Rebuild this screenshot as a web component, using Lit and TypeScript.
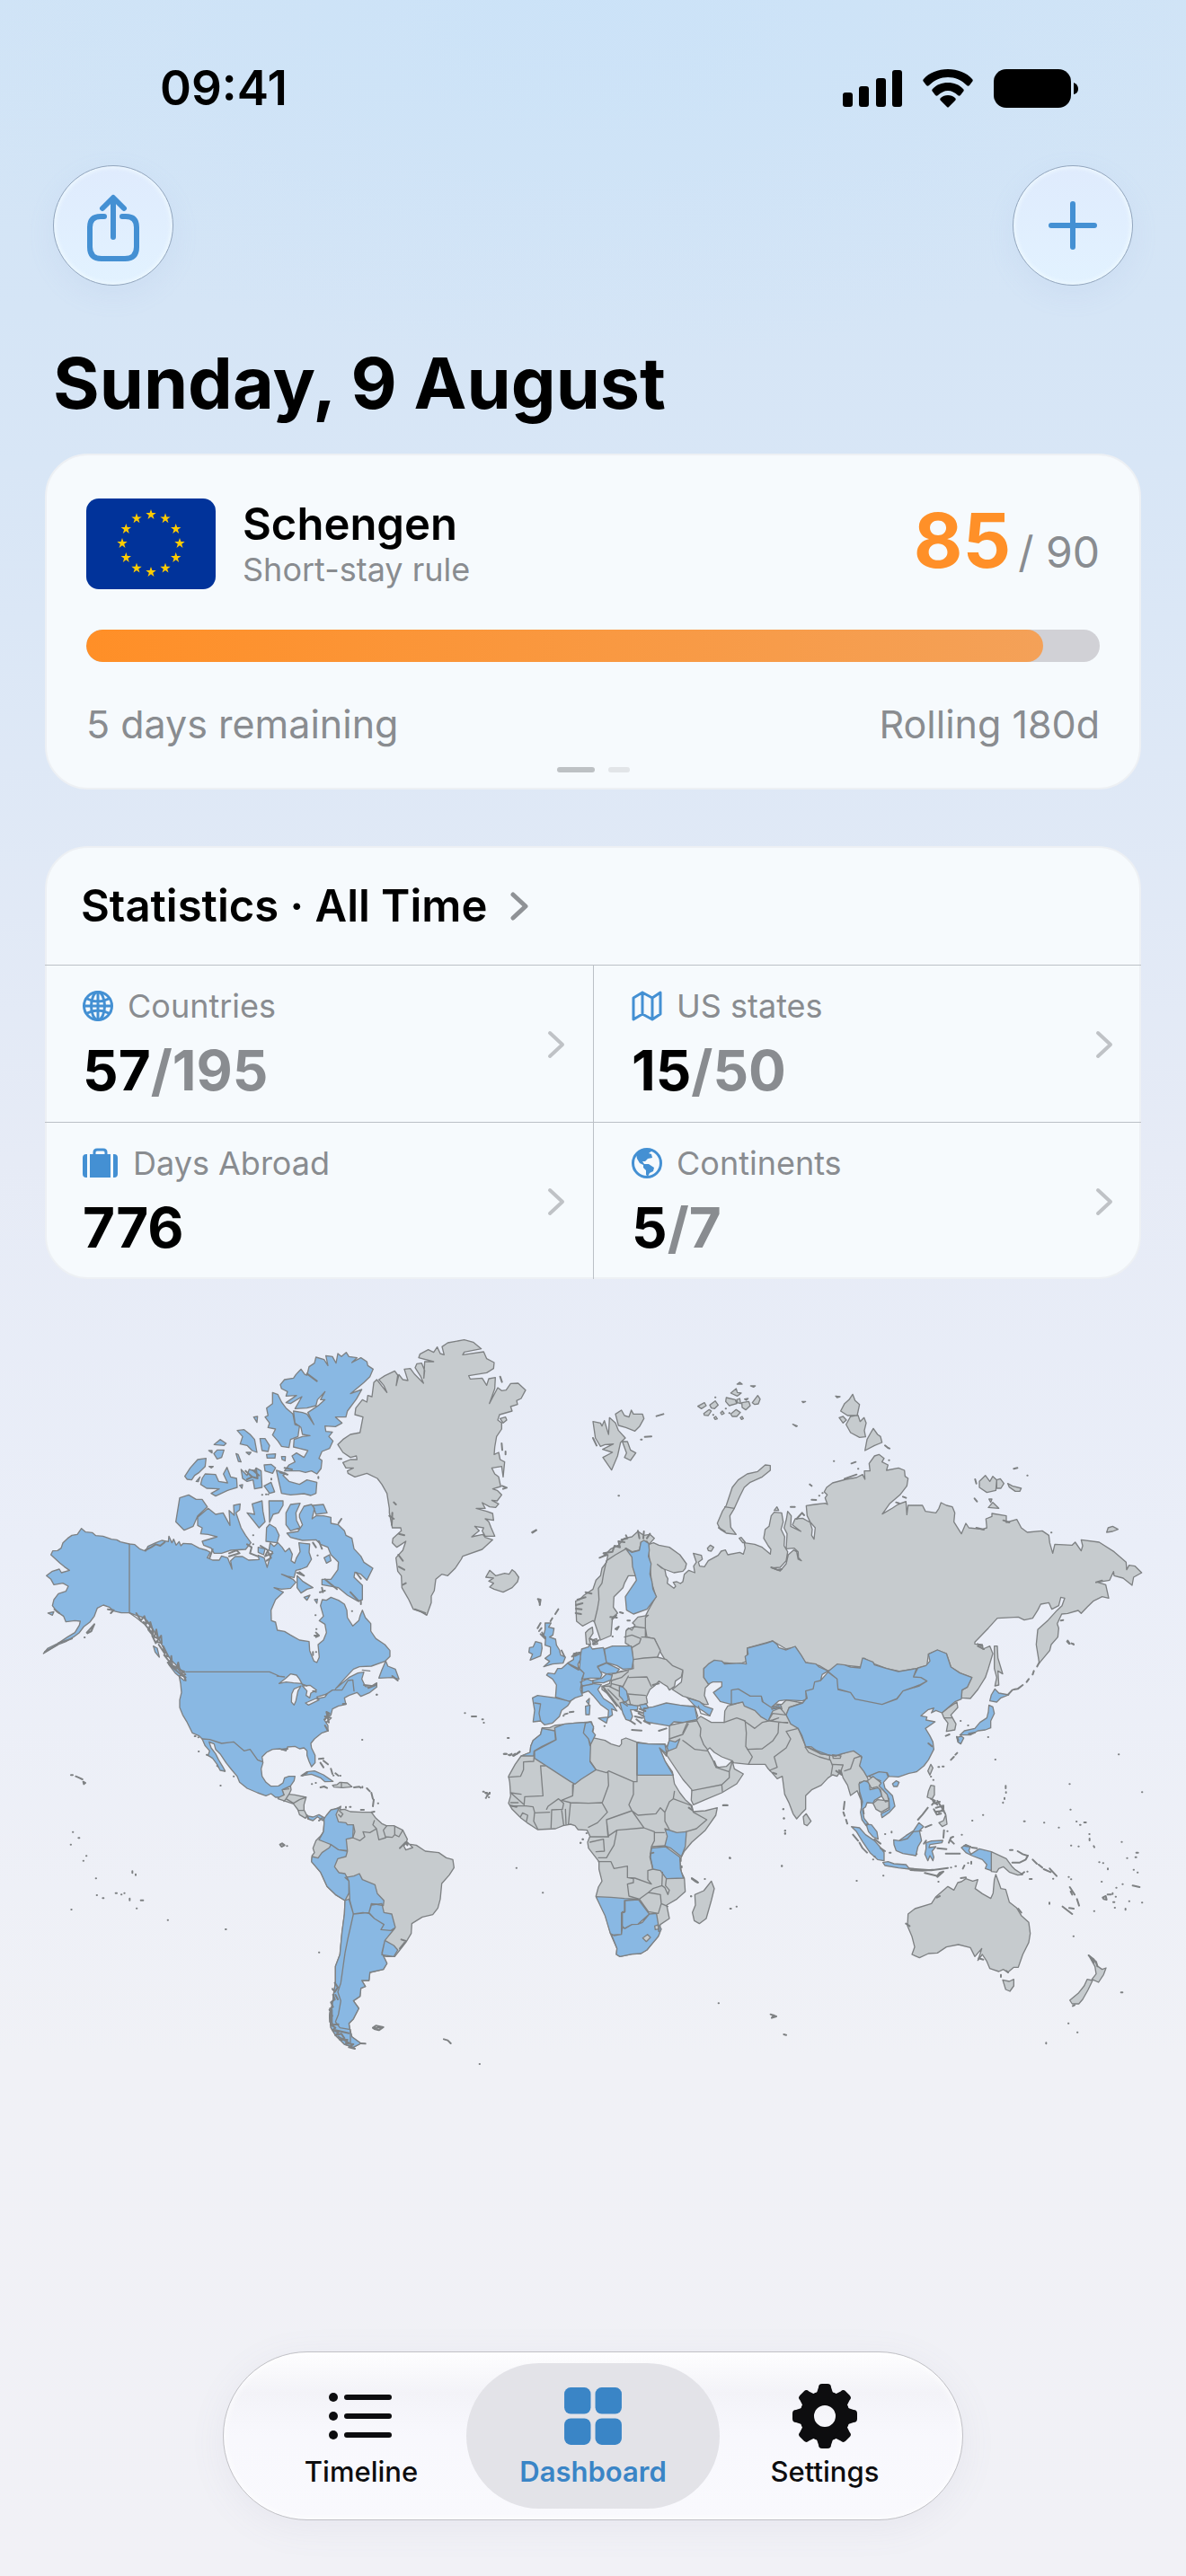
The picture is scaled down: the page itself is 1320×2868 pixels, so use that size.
import { html, svg, css, LitElement } from 'lit';
import { customElement, property, state } from 'lit/decorators.js';
import { classMap } from 'lit/directives/class-map.js';

interface Region {
  x: number;
  y: number;
  land?: string;
  visited?: string;
  rest?: string;
  borders?: string;
  coast?: string;
  specks?: string;
}

// Each region is drawn in its own local coordinates and shifted into place.
const REGIONS: Region[] = [
  {
    // Russia and the northern islands
    x: 2160,
    y: 150,
    land: `M-113,595 -98,590 -80,598 -45,605 -10,630 12,660 8,676 0,685 -30,690 -70,675 -85,662 -60,680 -56,700 -50,710 -52,725 -30,742 -24,735 -32,722 -20,720 -8,726 0,720 5,695 20,682 40,690 36,668 45,655 35,625 62,632 65,645 52,655 56,668 72,670 85,650 118,632 128,618 142,614 150,630 190,622 202,628 208,608 205,590 240,595 265,605 292,628 294,612 285,600 270,575 275,545 288,535 295,500 305,488 330,490 335,520 328,545 340,570 338,600 350,620 345,650 325,672 298,674 325,684 345,660 352,630 370,614 380,620 385,645 396,650 386,640 385,620 372,608 345,610 348,560 338,540 346,510 350,485 362,500 360,535 394,552 366,530 375,510 400,508 425,522 432,545 430,565 438,578 442,540 425,520 415,500 412,466 440,462 475,458 483,462 475,440 482,430 472,420 480,405 500,390 545,378 580,372 600,362 608,378 606,350 625,350 622,325 640,300 655,295 672,308 665,320 685,330 680,348 720,340 740,348 742,368 752,375 748,400 725,430 690,460 666,494 700,474 718,462 745,452 748,496 752,465 800,465 810,485 845,490 855,475 862,456 880,465 900,470 908,490 905,520 930,560 945,525 955,540 1000,545 1015,540 1012,510 1032,502 1032,492 1080,500 1080,522 1115,512 1130,540 1150,555 1200,550 1222,565 1225,590 1235,625 1242,595 1300,598 1310,588 1330,617 1335,600 1330,580 1390,588 1440,620 1480,655 1482,680 1490,665 1510,668 1532,690 1505,705 1500,732 1470,708 1440,700 1438,686 1425,715 1385,722 1412,730 1422,775 1400,770 1370,785 1350,805 1330,826 1320,816 1285,826 1265,828 1250,860 1255,875 1252,905 1230,930 1225,950 1190,992 1180,930 1185,880 1220,848 1250,815 1266,800 1275,775 1262,772 1255,800 1232,812 1222,790 1195,795 1185,815 1168,842 1140,848 1120,838 1050,842 1020,875 975,922 975,928 1000,930 1002,945 1025,935 1035,960 1020,1010 1010,1040 985,1080 960,1110 930,1108 932,1082 950,1072 965,1040 925,1025 895,1005 880,960 850,948 820,962 815,1000 780,1010 725,1020 680,1010 640,995 605,975 595,1005 530,998 485,1018 455,1000 410,990 375,938 345,945 300,918 215,942 215,985 190,995 130,990 105,985 70,1010 70,1040 90,1060 75,1075 72,1100 85,1130 72,1130 40,1115 0,1102 -35,1080 -5,1055 0,1020 -40,1002 -60,980 -78,950 -95,910 -120,905 -125,875 -125,835 -115,815 -90,770 -105,720 -110,660 -115,610Z
      M115,525 132,485 145,465 165,405 185,380 215,360 250,352 275,330 292,332 292,348 265,370 225,388 205,405 190,435 172,475 157,500 160,538 178,562 145,558 125,545Z
      M527,150 540,125 555,112 567,94 575,115 590,128 582,165 550,165Z M545,195 560,168 585,164 592,185 605,172 612,190 606,215 610,236 590,238 560,222Z M608,282 615,245 626,225 636,208 650,228 660,235 665,255 640,265Z M522,172 535,168 546,180 535,190Z
      M990,385 1010,365 1025,385 1035,368 1048,380 1045,415 1015,422 990,405Z M1048,380 1060,376 1072,392 1062,408 1048,408Z M1085,392 1100,400 1130,408 1125,418 1110,418 1090,404Z M1020,472 1035,455 1055,475Z M1415,555 1420,540 1435,535 1453,545 1435,552Z
      M1040,935 1050,935 1052,975 1068,1028 1052,1018 1055,1065 1042,1068 1048,1040 1040,1010Z M82,608 92,598 103,605 95,618 85,616Z M305,482 314,470 320,482Z M188,575 195,572 208,588 200,590Z M1022,444 1032,444 1028,455Z
      M50,134 72,122 78,132 62,142Z M70,158 88,145 95,150 85,165 72,164Z M90,130 108,116 118,130 106,142 95,140Z M145,105 175,112 180,125 155,132 143,118Z M160,90 178,75 182,88 195,90 182,100Z M180,112 190,108 193,125 182,122Z M197,122 220,118 225,132 210,146 198,138Z M232,122 250,98 258,110 252,126 240,128Z M160,160 178,145 192,155 180,168 165,168Z M126,156 132,150 138,158 130,162Z M104,172 110,168 115,176 108,178Z M192,172 198,168 202,175 196,178Z M181,60 190,54 198,60Z M226,66 242,66 236,70Z M206,110 218,108 212,114Z M398,118 410,118 402,122Z M367,194 382,200 378,202Z M510,100 525,102 515,105Z`,
    borders: 'M140,470 172,475',
    coast: 'M675,265 685,273 690,275 M563,325 577,320 M430,446 445,447 M360,470 374,470 M976,378 980,392 M974,442 982,452 M540,376 580,362 M1105,343 1117,340 M1285,917 1292,927 M1262,850 1270,848 M295,672 315,680 330,678 M120,540 140,552 M985,935 1005,945 M1070,515 1090,522 M1380,722 1400,716 M424,395 430,400 M380,510 398,490 405,498 M735,436 745,440 M712,455 722,458 M980,540 1005,546',
    specks: 'M108,104h1 M504,317h1 M688,314h1 M585,343h1 M455,433h1 M1150,365h1 M1230,556h1 M143,142h1 M155,157h1 M101,163h1 M1303,928h1 M466,424h1',
  },
  {
    // Asia and Oceania
    x: 2160,
    y: 990,
    land: `M-45,360 45,340 60,330 95,350 138,350 140,312 150,295 170,290 200,280 330,290 345,275 400,285 355,300 345,325 385,370 410,430 460,455 510,462 570,442 595,460 598,500 615,530 620,545 590,550 590,585 600,620 605,655 597,640 595,610 582,578 560,594 550,560 535,535 528,510 515,530 500,525 485,535 462,560 430,575 410,595 410,640 395,655 380,672 368,655 355,620 340,590 332,530 315,538 295,515 285,505 275,490 220,490 170,485 165,478 130,465 105,450 90,435 82,442 100,475 108,495 120,500 145,497 165,478 172,505 202,522 180,555 130,585 75,608 35,625 28,610 30,575 0,540 -20,510 -40,480 -60,450 -45,410Z
      M402,665 412,655 428,680 415,695 405,690Z M865,318 885,302 915,282 918,300 895,325 912,355 908,375 880,380 885,352 872,335Z
      M95,880 105,905 95,945 78,1005 55,1022 38,1012 32,985 42,960 40,925 70,912Z
      M818,512 828,490 835,502 825,526Z M820,580 828,560 840,562 840,592 832,606 816,600Z M855,685 870,678 878,658 882,690 866,698Z
      M1030,782 1080,805 1098,830 1110,842 1135,858 1118,860 1090,850 1070,832 1055,838 1048,850 1030,848Z
      M752,990 775,972 830,955 845,932 885,898 905,910 918,885 930,882 945,872 968,880 985,875 976,905 1000,922 1028,938 1036,920 1040,875 1045,858 1055,885 1062,905 1078,908 1090,950 1115,970 1130,995 1155,1018 1160,1055 1155,1085 1135,1125 1120,1168 1105,1168 1085,1185 1070,1175 1055,1182 1025,1172 1015,1148 1000,1125 985,1145 992,1125 998,1105 975,1132 960,1102 920,1092 880,1100 850,1120 820,1122 790,1136 765,1125 774,1100 765,1065 750,1030Z
      M1068,1210 1090,1215 1105,1208 1105,1230 1092,1248 1078,1242Z M1355,1128 1372,1140 1386,1165 1400,1175 1413,1170 1405,1192 1388,1218 1366,1208 1380,1190 1376,1165Z M1350,1208 1368,1212 1352,1245 1335,1275 1322,1290 1300,1290 1292,1278 1320,1255 1340,1230Z`,
    visited: `M70,170 85,155 105,142 130,145 140,155 190,152 212,155 208,130 218,122 215,102 280,85 300,78 315,90 320,100 345,108 375,96 395,125 410,150 445,155 455,165 485,178 465,190 460,210 440,215 435,238 410,245 415,270 400,278 345,275 320,278 295,300 265,280 262,262 225,262 185,238 162,242 162,290 125,280 102,250 130,230 130,215 100,215 85,222 70,200Z
      M162,290 162,242 185,238 225,262 262,262 268,282 295,300 325,290 330,300 300,312 285,345 262,332 240,310 205,295 200,282Z
      M485,180 515,155 540,158 560,165 592,168 600,135 635,148 640,158 680,170 720,180 780,170 770,198 795,200 815,212 790,225 735,245 715,270 665,290 575,272 560,250 518,238 515,205Z
      M485,182 515,205 518,240 560,250 575,272 665,290 715,272 735,245 790,228 815,212 795,200 770,198 785,168 812,160 825,145 820,122 850,108 880,120 895,165 925,185 965,200 950,232 932,242 930,272 910,280 865,318 845,310 830,318 838,302 818,308 795,328 815,332 812,342 842,348 810,370 825,395 835,415 838,440 820,475 805,495 780,515 755,520 720,532 685,530 680,518 655,515 615,532 605,515 590,495 598,465 570,445 530,455 510,462 460,455 430,432 410,430 398,395 385,370 360,355 345,325 355,300 400,285 412,270 410,245 435,238 440,215 460,210Z
      M700,555 712,545 722,550 716,564 704,564Z M588,555 605,545 622,550 625,575 655,568 665,595 640,610 635,620 615,618 610,632 600,640 605,670 620,690 612,695 598,675 593,650 600,615 590,580Z
      M612,690 630,692 648,715 652,740 635,732 620,715Z M618,530 655,515 682,518 688,530 670,550 675,570 700,595 708,630 690,650 665,668 662,655 690,640 688,605 668,575 650,560 660,545 635,535Z
      M563,698 590,702 610,725 640,745 655,762 672,785 672,812 650,808 625,785 600,748 580,715Z M668,818 685,815 705,822 745,825 758,840 720,836 675,828Z
      M704,742 722,745 745,728 770,712 788,685 804,698 790,712 797,745 785,765 778,795 735,788 712,778 705,758Z M812,752 830,746 868,744 865,752 825,758 822,768 845,765 832,780 838,800 835,812 825,795 818,812 808,790 812,772Z
      M930,768 945,758 960,765 955,778 962,790 990,772 1030,782 1030,845 1010,838 1015,825 1000,808 965,795 945,785Z M1030,258 1042,238 1055,252 1088,258 1062,268 1048,282 1025,278Z
      M1022,292 1035,298 1040,320 1028,345 1028,368 1010,375 985,378 960,392 925,392 940,378 975,370 992,350 1015,335 1020,315Z M915,400 930,396 938,402 928,422 918,415Z`,
    rest: `M616,545 635,530 662,552 655,562 682,590 688,612 676,615 665,598 660,575 648,565 630,570Z M635,620 650,608 688,612 688,635 662,650 645,640Z`,
    borders: `M45,340 60,370 58,395 70,425 82,440 M0,410 40,440 82,445 M138,350 180,335 208,345 212,385 210,430 232,465 220,488 M205,345 240,370 265,350 300,342 320,335 M215,440 265,438 300,412 318,385 320,350 350,350 M385,370 345,380 360,405 345,435 305,465 315,500 290,510 M408,432 420,450 455,465 490,475 490,460 410,430 M500,458 528,462 525,470 502,470Z M492,475 500,495 495,525 M500,490 535,492 525,520 M595,462 572,470 560,505 540,512 M30,578 60,572 130,558 155,535 155,515 165,480 M130,558 132,580 M110,500 155,515 M285,345 300,320 345,325 M290,345 350,352 M725,745 750,738 770,715 797,712 M872,335 898,335 M20,270 60,300 M0,385 15,350 45,345 M298,305 325,302 345,325`,
    coast: `M1190,150 1183,163 M1172,178 1168,190 M1155,205 1148,215 M1135,225 1118,238 1105,240 M1100,242 1085,258 M755,838 830,844 885,836 M760,843 800,845 835,842 M848,864 858,852 870,848 850,866 M785,675 800,658 818,635 M540,615 537,640 M536,650 540,662 M545,675 549,688 M568,725 585,745 M590,752 600,770 615,785 M835,612 850,625 M840,620 858,615 M845,635 870,628 870,640 855,650 M850,612 868,640 876,655 M838,640 848,658 862,655 M845,648 872,645 M828,605 842,612 832,625 M1100,818 1125,818 1145,808 1152,795 M1118,780 1135,790 1150,795 M1168,808 1182,822 M1188,825 1200,835 M1205,840 1228,850 M1225,838 1248,863 M1292,900 1308,925 M1295,915 1300,925 M1316,940 1323,962 M1268,965 1300,990 M1290,970 1305,972 M1402,935 1412,930 1415,942 1405,940Z M1418,925 1430,925 M1502,895 1525,900 M878,788 925,788 M850,770 880,773 M888,752 895,735 903,732 M895,745 905,755 M870,735 872,710 M810,700 830,692 M808,853 845,862 M935,838 940,828 M963,815V822 M805,755 812,745 M640,740 660,755 M660,770 675,780 M928,870 945,868 M848,935 858,930 M745,1022 757,1030 M988,1138 1003,1142 M1080,1180 1086,1185 M1062,1193V1200 M1355,1128 1380,1150 1384,1165 M1360,1132 1372,1152 M1302,1297 1308,1294 M293,1325 312,1332 297,1337 303,1328 M337,1392 345,1394 M1463,1252h5 M1283,80 1290,87 M1298,86 1305,90 M895,475 905,465 M910,458 916,452 M878,395 890,390 M955,388 975,384 M512,512 530,525 522,510 M300,518 312,522 M30,870 45,880 50,884 M105,480 112,498 M298,305 320,298 330,305 M940,762 960,765 M965,768 982,770 M1130,858 1140,850 M984,88 1000,95 M915,398 920,410 M1120,972 1130,985 M820,420 832,430 M134,627h14`,
    specks: `M335,640h1 M337,671h1 M341,712h1 M341,722h1 M157,803h1 M330,829h1 M580,879h1 M669,862h1 M158,972h3 M179,965h1 M27,931h1 M119,1288h1 M853,499h3 M867,497h4 M1043,474h1 M1455,457h1 M1291,556h1 M1533,583h1 M1078,562v8 M1079,583v2 M1074,602v4 M1069,617v2 M1002,659h1 M966,678h1 M1139,680h3 M1206,685h1 M1255,701h1 M931,725h1 M1294,641h1 M1314,681h1 M1326,692h2 M1340,684h6 M1357,723h1 M1358,738v6 M1372,763l2,4 M1296,761h1 M1321,764h1 M1465,749h1 M1483,803h1 M1514,785h6 M1511,800h3 M1390,817h1 M1403,820h1 M1419,838v3 M1505,842h1 M1518,851h1 M1398,882h1 M1468,890h1 M1447,902h1 M1490,947h1 M1533,952h1 M1373,980h1 M1478,972v4 M1442,969h1 M1224,952v4 M1304,1064h1 M1287,1355h1 M1317,1385h1 M1213,1420v3 M883,713h1 M828,531h1 M836,542h1 M675,723h1 M697,715v3 M690,785h4 M927,345h1 M1019,399h1 M952,360h1 M1288,866h1 M1296,874h1 M1236,872h1 M1150,848h1 M1158,873h7 M1435,920v3 M1445,932h1 M1437,950h4 M1092,776h6 M910,830h2 M895,835h1 M952,820h1 M780,790h1 M853,882h1 M640,798h1 M635,808h1 M1100,776h1`,
  },
  {
    // Europe
    x: 1560,
    y: 630,
    land: `M242,305 255,300 270,285 300,265 310,235 325,220 330,195 345,175 350,150 335,155 360,130 385,118 405,95 430,90 450,72 470,85 490,82 505,95 487,115 480,105 460,108 455,135 430,140 410,128 430,150 435,195 442,220 418,220 405,245 400,260 370,290 368,325 382,345 365,360 360,420 325,435 305,375 300,370 290,375 265,388 245,372Z
      M408,445 410,405 418,395 430,402 440,385 432,378 450,358 485,352 475,360 475,425 505,430 525,470 515,492 545,500 565,520 600,535 595,558 575,572 572,590 555,602 548,590 535,582 520,572 505,588 490,600 478,625 482,645 470,650 445,655 425,650 400,650 400,672 392,665 385,655 350,615 330,600 330,590 355,580 365,545 415,535 435,530 430,460 420,452Z
      M275,410 285,400 298,392 300,412 288,430 292,450 278,448Z M298,435 312,430 315,448 302,450Z`,
    visited: `M408,128 430,142 455,135 460,108 470,102 486,112 488,135 485,155 494,180 490,215 497,240 500,265 512,290 480,332 435,348 412,335 408,290 445,235 440,215 432,190 430,158Z
      M140,378 160,378 152,392 170,396 166,418 155,425 175,432 178,452 188,468 192,485 208,492 200,512 165,515 135,524 155,506 140,496 158,482 158,458 140,452 142,425 135,420 140,400Z M88,460 100,458 108,440 128,445 130,462 125,488 90,502 98,482 86,476Z
      M338,465 365,455 428,455 435,500 430,530 400,532 380,520 345,510Z M262,465 285,458 288,450 298,465 335,460 345,510 315,522 330,550 325,562 290,562 262,566 270,545 255,530 258,490Z M315,525 345,512 388,532 378,545 345,548 325,540Z
      M235,480 258,475 258,500 250,515 252,535 228,522 215,512 235,500Z M145,552 150,545 172,548 182,530 195,530 215,512 255,532 270,545 262,575 258,600 265,620 240,628 222,640 175,625 178,585 165,565Z
      M298,570 330,562 345,548 364,552 360,568 335,578 300,576Z M258,575 280,565 300,572 298,582 265,588Z M262,590 300,580 328,584 316,600 335,630 365,650 380,672 362,665 365,685 350,695 352,670 325,650 300,620 285,605 265,612Z M318,696 350,692 345,712Z M275,656 290,652 288,684 276,684Z M278,640 288,630 286,650Z
      M98,628 115,620 175,628 225,640 215,655 195,670 188,690 165,712 138,718 125,705 100,708 105,670Z M388,588 400,592 412,605 418,635 404,645 398,632 388,622Z M390,645 408,640 415,650 450,655 448,668 425,668 432,690 425,705 410,700 400,680Z
      M470,662 500,658 545,645 590,652 640,658 648,700 600,710 570,708 555,722 520,716 475,708 468,685Z M455,652 478,648 485,662 462,668Z M615,628 655,640 672,655 700,665 690,688 668,672 640,655Z M543,808 555,770 575,775 590,765 578,795 552,805Z`,
    borders: `M410,130 375,150 345,170 335,215 330,245 318,262 320,300 315,330 305,372 M105,645 125,648 120,680 125,705 M365,548 418,535 M330,590 360,588 362,570 395,560 418,540 M420,560 480,558 495,590 M360,580 400,590 418,555 M415,615 475,620 M418,620 425,650 M435,500 470,495 515,492 M405,425 430,418 460,430 455,445 430,460 M475,395 440,390 412,400 M462,425 478,425 M355,590 385,605 M350,600 385,635 M265,588 262,612 M400,645 415,655 M640,658 650,690 M652,655 660,680 690,688 M555,765 600,750 618,715 M615,655 640,655`,
    coast: `M322,160 345,150 335,145 365,140 372,120 390,125 385,105 405,108 M243,330 262,332 M242,345 260,348 M243,318 265,312 M248,300 275,292 M275,275 295,280 M395,100 415,95 410,85 M450,70 455,95 M470,72 468,95 M490,80 480,95 M115,395 125,378 M120,405 128,395 M125,415 140,430 130,410 M174,348 184,332 M158,372 164,362 M116,298 125,300 122,318 M98,76 110,68 M380,400 386,390 375,398 M300,448 320,435 M290,430 310,440 M425,705 440,715 M452,680 470,690 M440,670 465,678 M430,735 462,737 M440,690 465,695 M445,700 460,712 M455,665 475,672 M520,738 545,730 M4,815h6 M22,820 28,815 M35,822 55,808 M205,683 215,680 M222,676 235,674 M15,762h3 M358,358 380,360 M364,365 378,352 M390,342 400,345 M500,585 520,580 M735,987h14 M470,705 490,715 M195,470 205,490 M245,478 230,490 M255,480 240,488 M333,590 375,645 M338,600 380,655`,
    specks: `M338,722h1 M201,688h1 M935,1000h1 M937,1030h1 M941,1072h1 M941,1080h1 M756,1162h1 M930,1190h1 M258,1112h1 M266,1100h1 M278,1080h1 M365,423h1 M415,370h8`,
  },
  {
    // Africa
    x: 1500,
    y: 1230,
    land: `M152,190 160,170 185,150 190,128 215,128 232,120 300,112 355,108 362,130 355,160 400,170 420,182 448,190 455,182 455,168 470,162 505,175 545,182 600,182 610,200 605,222 582,195 600,240 625,275 632,315 650,345 668,368 690,388 695,408 735,405 775,395 770,420 735,470 690,510 665,540 650,570 655,610 665,630 668,675 640,700 606,720 615,765 585,785 580,820 540,870 520,882 490,884 450,892 438,885 440,865 420,820 400,750 385,720 370,690 378,660 390,640 380,600 380,575 345,530 342,510 350,490 340,470 310,468 300,455 285,450 260,455 235,465 175,468 140,445 120,430 90,400 78,380 85,355 82,310 78,290 100,250 120,222 150,210Z`,
    visited: `M152,190 160,170 185,150 190,130 232,138 235,168 190,190 163,206 162,222 120,222 150,210Z M232,128 265,115 300,112 335,110 328,145 345,165 352,185 350,240 370,268 320,300 300,316 285,308 165,230 165,206 215,180 237,168Z M335,112 352,108 362,125 358,140 368,152 350,188 345,165 328,145Z
      M507,178 545,182 600,183 606,215 582,195 600,238 628,286 H507Z M600,465 640,478 672,475 668,525 655,558 620,530 600,522 608,490Z M555,530 602,525 650,560 652,600 662,630 605,632 585,605 560,600 552,560Z M370,692 420,694 465,698 510,700 465,705 465,745 455,745 455,818 430,822 418,815 400,755Z
      M467,705 512,702 548,750 525,778 510,784 490,785 465,798 458,790 458,742 467,742Z M422,820 455,818 458,795 468,798 490,785 510,784 548,750 572,748 578,785 588,800 578,825 540,870 520,882 490,884 450,892 438,885 440,865Z`,
    rest: 'M526,830 542,818 552,828 538,842Z M566,790 576,786 580,800 568,802Z',
    borders: `M350,240 370,268 405,278 412,272 495,308 507,308 V178 M410,275 412,320 392,375 M295,316 292,355 255,370 285,378 345,380 390,378 M495,308 495,350 480,385 490,405 510,420 570,415 585,395 600,410 615,375 628,365 690,388 M632,340 628,365 M688,390 695,410 740,435 705,465 670,475 M600,410 600,440 615,468 M490,405 530,462 440,470 410,490 405,435Z M390,378 408,410 375,445 345,460 M405,435 412,492 350,492 M440,470 430,520 415,545 405,562 378,562 M530,462 565,475 565,505 555,525 550,560 560,600 543,605 543,635 555,650 500,630 475,628 475,590 430,598 420,575 378,575 M475,628 495,632 495,645 475,650 480,690 515,700 545,678 560,665 590,655 592,610 M515,700 545,742 578,748 588,715 585,685 545,678 M588,715 610,725 M590,655 600,662 610,685 615,670 602,655 605,632 M185,255 193,355 132,358 M185,255 200,255 M132,358 130,385 85,345 M292,318 292,355 M163,225 162,240 128,242 128,268 118,290 78,293 M85,345 120,350 M90,390 130,388 160,392 165,410 162,440 175,465 M168,412 215,410 M118,425 125,412 142,420 138,440 M205,400 210,390 245,365 262,380 258,400 222,402 220,462 M255,400 262,452 M268,400 270,450 M285,378 278,450 M555,525 600,522 M565,478 598,478 M350,510 395,500 398,540 370,542 M85,378 110,378`,
    coast: 'M62,215h10 M78,218h8 M92,220 100,215 M106,215 115,208 M0,345h6 M5,357 15,345 M795,386h13 M85,388 105,392 M690,632 700,640 710,645 M680,395 690,402 M552,548 562,545',
    specks: 'M77,162h2 M104,596h1 M192,679h1 M817,563h1 M733,633h1 M687,691h1 M318,512h1 M325,500h1 M653,565v8 M656,590v5 M580,798v10',
  },
  {
    // South America, the Caribbean and the Pacific islands
    x: 0,
    y: 1050,
    land: `M962,612 985,585 1010,575 1018,570 1015,582 1030,580 1050,588 1090,590 1120,590 1135,610 1155,628 1170,635 1195,635 1225,650 1240,680 1235,695 1270,700 1300,720 1345,725 1370,742 1392,748 1396,775 1380,800 1355,828 1350,880 1342,910 1325,932 1290,940 1255,962 1253,995 1235,1025 1215,1050 1198,1072 1170,1072 1155,1068 1165,1080 1172,1095 1160,1115 1115,1125 1112,1152 1088,1152 1100,1172 1085,1178 1082,1205 1060,1220 1078,1245 1060,1280 1045,1295 1048,1315 1055,1340 1085,1362 1060,1375 1030,1365 1000,1335 985,1310 980,1270 990,1230 995,1190 1000,1160 1000,1105 1015,1065 1022,990 1030,930 1032,885 1000,865 972,838 950,790 920,755 922,735 930,725 925,710 935,685 950,670 960,655 962,630Z
      M822,515 850,502 852,515 845,530 865,532 902,540 895,565 895,582 905,602 900,610 880,598 875,582 860,562 835,554 808,545 812,535 828,532Z M990,500 1005,498 1015,490 1040,492 1055,505 1025,508 995,506Z M1228,702 1240,690 1258,708 1235,716Z`,
    visited: `M962,612 970,600 985,582 1012,576 1002,598 1010,622 1035,625 1040,632 1060,632 1058,675 1036,680 1040,718 1010,715 985,698 965,690 945,682 960,655 962,630Z M985,698 1010,715 1040,720 1035,738 1008,745 997,772 1012,792 1032,795 1045,820 1045,860 1032,885 1000,865 972,838 950,790 920,755 922,738 942,743 955,725 980,708Z
      M1032,808 1062,803 1080,795 1090,815 1132,832 1140,862 1162,885 1160,902 1120,895 1112,925 1060,930 1048,885 1045,820Z M1112,925 1120,900 1155,895 1162,925 1188,930 1200,975 1185,985 1152,982 1162,965 1130,945Z M1165,1018 1195,1035 1208,1050 1195,1072 1155,1066Z
      M1032,885 1045,880 1060,930 1092,925 1112,928 1130,945 1162,965 1152,982 1185,985 1198,978 1165,1018 1155,1060 1165,1080 1172,1095 1160,1115 1115,1125 1112,1152 1088,1152 1100,1172 1085,1178 1082,1205 1060,1220 1078,1245 1060,1280 1045,1295 1048,1315 1055,1340 1085,1362 1060,1375 1030,1365 1000,1335 985,1310 980,1270 990,1230 995,1190 1000,1160 1000,1105 1015,1065 1022,990 1030,930Z
      M905,602 925,606 945,598 962,608 958,618 940,605 925,618 908,612Z M885,468 905,455 930,452 960,465 992,487 965,488 950,475 920,463Z`,
    borders: `M1060,930 1050,975 1042,1010 1032,1060 1025,1110 1018,1160 1008,1190 1018,1220 1010,1265 1000,1290 1015,1310 1050,1316 M1050,1320 V1362 M1060,632 1065,655 1058,675 1082,685 1098,672 1092,655 1115,658 1137,645 1125,632 1130,618 M1137,645 1145,682 1168,675 1160,650 1172,635 M1168,672 1190,674 1198,665 1212,672 1225,650 M1198,637 1198,665 M845,530 835,545 860,560 880,548 902,540 M835,545 828,554 M875,584 895,584 M1020,490V508 M822,515 845,512 M1013,585 1025,596 1018,606 1010,598`,
    coast: `M998,1160 1008,1175 998,1190 990,1180 M992,1200 998,1215 985,1225 992,1240 980,1250 990,1270 982,1285 992,1300 1010,1298 M1000,1200 1008,1215 M985,1300 1000,1310 990,1318 1010,1325 1000,1335 1020,1330 1030,1345 1015,1350 1040,1350 1035,1362 1060,1365 1045,1375 1065,1380 M982,1245V1290 M988,1250V1300 M1000,1318 1045,1328 M1010,1340 1045,1360 M1085,1362 1100,1363 M1125,1310 1135,1303 1160,1308 1145,1318 1130,1314Z M1132,1312 1155,1308 M1362,1348 1375,1352 1385,1362 M815,698 820,705 830,700 822,694Z M117,466h6 M133,470 145,475 155,480 M158,488 165,492 160,496Z M1062,507 1080,505 1085,508 M950,507 962,504 972,509 M1215,710 1235,690 1240,700 M1220,1015 1235,1020 1215,1045 M945,412 960,410 M950,425 960,440 M960,418 975,430 M985,445 990,462 M1000,460 1010,468 M1105,510 1115,520 M1120,525 1125,545 M1128,548 1125,570 M1120,590 1130,588 M1455,270h15 M570,398 585,402 M605,435 630,452 M945,618 955,610 M905,458 890,468 M905,600 910,612`,
    specks: `M1432,259h1 M1490,280h3 M1495,291h1 M1089,348h1 M543,387h1 M616,501h1 M123,656h1 M142,676h3 M116,698h1 M168,736h1 M158,752h1 M322,787v6 M333,797v3 M200,811h1 M203,867h1 M223,877h3 M266,860h4 M285,865h1 M295,860h1 M313,878v6 M350,884h8 M336,911h1 M118,915h1 M440,950h1 M633,981h2 M945,1058h1 M1481,1431h1 M1493,521h3 M1503,527h3 M1515,525v3 M1502,542h1 M1512,540h1 M838,703h1 M921,496h1 M934,492h1 M1142,560h1 M1035,572v3 M1048,572h3 M1085,582h10 M1090,505v3 M1138,197h1 M660,470h1 M530,336h3 M542,340h1 M1016,468h1 M993,467h1`,
  },
  {
    // Canada, Alaska, the United States and Mexico
    x: 0,
    y: 0,
    visited: `M50,780 56,767 72,766 84,758 90,740 106,725 120,715 138,712 152,692 166,704 188,706 200,716 224,718 252,728 270,730 282,737 312,744 330,746 346,760 366,768 374,752 400,740 420,732 442,736 444,718 454,740 460,728 468,748 478,736 484,750 492,742 520,744 545,758 570,765 582,772 572,790 590,798 612,798 620,784 640,790 655,828 650,800 665,786 690,786 710,798 745,796 742,782 762,790 772,822 778,800 790,770 778,765 782,740 795,752 808,740 822,755 832,770 846,758 856,778 852,800 864,808 870,790 882,770 878,740 895,742 914,744 912,772 920,795 905,820 885,828 868,832 862,856 840,852 820,845 858,862 868,872 850,892 820,895 795,890 826,905 800,930 785,965 786,1000 800,1005 806,1032 830,1036 850,1048 880,1065 912,1070 914,1100 920,1115 928,1135 938,1140 946,1122 942,1080 960,1065 970,1040 965,1012 946,1000 960,985 950,950 956,930 970,932 985,922 1010,932 1030,945 1038,965 1040,990 1058,1018 1078,1000 1082,985 1090,965 1100,990 1118,1010 1118,1035 1135,1060 1165,1080 1182,1100 1182,1120 1165,1136 1120,1152 1080,1154 1060,1162 1032,1192 1000,1228 1045,1190 1075,1175 1095,1172 1088,1195 1100,1220 1115,1222 1138,1208 1138,1222 1115,1240 1085,1253 1072,1240 1045,1250 1030,1258 1035,1280 1010,1285 990,1295 985,1315 962,1330 975,1350 975,1368 955,1375 930,1395 918,1410 920,1425 932,1450 932,1475 920,1488 912,1470 905,1450 905,1435 895,1425 880,1428 865,1420 840,1422 835,1435 815,1428 790,1430 770,1440 755,1455 758,1475 752,1495 755,1520 768,1540 785,1553 810,1552 825,1542 830,1525 845,1520 865,1520 862,1535 850,1552 822,1565 828,1582 812,1590 800,1590 785,1578 768,1585 740,1575 705,1560 680,1540 672,1520 655,1500 635,1475 615,1445 600,1430 595,1412 578,1405 585,1425 600,1445 610,1465 625,1490 632,1503 615,1500 605,1480 590,1460 575,1450 580,1435 565,1418 555,1395 545,1385 522,1375 505,1340 490,1315 480,1290 480,1265 486,1240 483,1210 478,1185 500,1180 480,1160 450,1130 430,1100 410,1060 385,1020 360,990 335,982 312,974 285,974 260,968 245,955 225,948 205,958 195,985 180,1005 160,1020 145,1040 125,1055 100,1070 75,1080 25,1110 40,1092 75,1075 105,1055 130,1040 145,1015 148,1002 130,1000 100,1004 92,985 70,970 55,950 60,930 75,910 100,902 108,885 90,875 60,880 50,862 35,850 55,835 78,828 85,840 112,832 95,820 80,808Z
      M812,1210 835,1192 850,1178 870,1182 880,1195 888,1210 860,1208 835,1205Z M862,1228 885,1218 875,1235 868,1268 862,1282 853,1272 854,1245Z M890,1218 915,1216 937,1232 918,1242 914,1258 902,1250 905,1235Z M900,1275 935,1260 945,1265 910,1282Z M938,1255 972,1245 965,1255 942,1260Z
      M816,212 830,195 860,190 868,178 885,160 898,178 905,180 912,152 930,140 935,120 962,128 975,148 968,115 990,118 1002,140 1008,108 1020,118 1036,104 1045,118 1072,122 1055,138 1085,122 1105,135 1108,148 1126,160 1115,185 1095,205 1050,242 1088,228 1070,260 1040,300 1035,320 1000,320 1022,340 1000,352 965,350 968,368 990,370 978,385 992,400 980,425 955,435 945,458 955,465 952,492 938,510 920,500 900,505 880,500 830,500 845,480 865,470 855,450 870,440 895,455 908,432 880,425 860,420 862,395 890,385 915,382 890,378 885,355 865,340 860,300 890,305 905,310 928,345 908,305 945,280 965,262 950,262 965,235 940,262 935,282 905,290 865,292 888,252 850,275 835,272 870,248 835,250 840,235 820,225Z
      M790,238 808,245 820,270 835,290 858,310 865,345 880,350 875,385 850,395 845,422 820,418 808,400 790,380 800,360 775,355 780,340 765,320 775,315 770,290 790,275Z M672,365 695,362 715,378 730,395 738,438 722,432 705,415 682,410 690,385Z M748,392 765,392 780,415 775,435 755,432Z M595,412 615,395 635,408 628,415Z M594,442 605,430 628,430 620,455 605,460Z M497,518 515,490 540,462 568,458 565,485 545,505 530,515 520,530 505,528Z
      M550,545 555,525 565,510 600,512 610,535 640,540 626,510 638,488 650,520 670,525 672,555 640,565 600,584 585,575 612,560 570,558Z M685,495 705,515 712,495 730,500 735,490 752,500 755,555 730,560 725,530 705,535 690,525Z M762,480 785,478 800,490 790,508 765,500Z M762,550 785,538 797,570 780,575Z M803,498 835,508 825,515 845,535 880,545 905,530 938,538 935,575 918,582 895,576 850,580 820,575 812,540Z M770,445 800,443 798,457 772,457Z M820,452 833,452 832,466 822,462Z M668,442 675,445 685,470 676,468Z M727,320 740,318 738,338Z M702,438 718,438 712,446Z M578,485 592,485 586,490Z M680,548 690,546 688,558Z M577,432 588,432 588,440Z M535,535 548,520 542,536Z
      M480,590 510,580 535,595 555,595 572,620 540,650 525,685 495,698 467,670Z M540,655 575,625 600,645 625,640 648,682 645,632 662,648 660,615 682,610 680,630 668,640 685,690 700,715 718,740 700,762 650,765 620,775 595,775 585,758 560,748 555,735 605,720 575,712 550,710 555,690 540,682Z M705,640 730,645 722,610 755,600 758,635 765,670 745,690 725,665Z M778,600 825,600 825,615 810,640 792,645 780,672Z M770,690 780,678 800,690 812,715 805,740 768,735Z M835,640 850,612 882,608 868,640 870,665 882,690 850,700 835,680Z
      M880,645 895,618 920,612 930,625 922,660 935,650 960,650 985,655 985,675 1010,680 1030,700 1035,715 1055,725 1062,760 1085,785 1095,805 1125,825 1105,865 1085,845 1065,838 1062,855 1090,882 1090,930 1075,935 1040,915 1010,890 955,880 955,862 985,862 1008,830 1010,805 985,780 975,755 950,745 935,730 890,732 850,722 838,708 875,702 890,680 880,655Z M925,615 960,612 972,640 935,645Z M872,850 890,868 925,890 905,895 885,908 872,890Z M742,755 765,760 760,780 742,772Z M962,790 980,780 985,800 970,808Z M895,922 915,915 905,932Z M930,930 940,928 938,942Z M1168,1135 1175,1152 1200,1162 1212,1195 1190,1190 1145,1192 1155,1165Z M442,1145 470,1155 500,1195 495,1200 465,1175Z M392,1085 405,1092 412,1122 398,1105Z M40,975 60,970 55,982Z`,
    borders: 'M312,744 V974 L335,990 360,1010 M500,1171 H780 L812,1185 M888,1212 905,1218 M968,1247 990,1232 1022,1232 1042,1200 1058,1198 1062,1235 M555,1395 580,1397 620,1410 660,1405 695,1435 715,1430 740,1465 757,1472 M1090,1165 1115,1168 M805,1185 830,1188',
    coast: `M335,975 350,1000 362,985 370,1010 358,1005 378,1030 382,1005 392,1040 375,1030 395,1055 402,1030 408,1060 388,1050 400,1075 418,1050 420,1075 400,1070 M410,1080 430,1110 425,1085 442,1120 428,1115 448,1140 452,1118 455,1148 440,1140 470,1160 475,1140 480,1165 495,1170 485,1175 500,1190 M370,1000 385,1020 375,1025 390,1045 M448,1150 475,1172 490,1185 M170,1040 195,1012 185,1035 172,1042 M75,1075 120,1060 M30,1104 72,1080 M240,962 260,965 250,975 M62,962 78,975 M365,765 385,755 400,745 415,750 430,738 M645,775 670,765 680,775 645,785 M705,745 720,755 715,775 740,785 M700,500 722,520 705,528 M735,495 740,525 722,520 M725,498 745,515 M750,750 775,765 765,785 790,775 M775,770 785,790 770,800 M872,840 895,850 880,838 M945,735 955,760 M925,740 935,755 M1070,840 1085,860 M1050,905 1078,935 M1085,935V945 M905,175 938,200 M965,1330 980,1310 970,1305 978,1340 M965,1320 985,1325 970,1340 M965,1350 975,1368 M492,1180 500,1200 M965,862 1005,895 M955,890 958,905 M948,905 965,900 M935,1040 945,1050 935,1055 M930,1050h15 M1095,1215 1120,1218 M1110,1225 1135,1215 M1190,1185 1208,1200 M1020,660 1010,675 M815,505 840,512 M830,490 855,495 M590,762 580,790 M1035,1278h-10 M925,1235 935,1238 M820,1430 840,1428 M925,1105v10`,
    specks: 'M162,1056h1 M725,715h1 M755,580h1 M768,578h1 M775,578h1 M786,526v3 M725,745h1 M943,520v4 M933,982h1 M936,1028h1 M935,1105h1 M1055,968h1 M1137,1247h1 M940,782h1',
  },
  {
    // Greenland, Iceland and Svalbard
    x: 900,
    y: 0,
    land: `M228,205 238,195 272,238 262,215 245,195 265,182 298,166 308,180 303,215 312,178 325,195 342,198 330,160 350,158 365,178 394,207 385,185 366,155 372,142 388,140 398,165 395,190 398,135 428,135 378,122 382,110 410,95 428,104 440,86 450,108 463,112 456,85 475,72 530,62 560,70 587,92 530,103 525,112 595,102 605,125 630,138 628,158 605,172 545,182 550,193 590,190 605,214 612,192 634,188 632,225 614,275 642,222 655,232 670,230 685,208 710,207 735,230 720,258 705,265 708,278 685,285 690,300 648,312 642,330 655,340 655,360 638,385 632,420 630,445 645,438 650,462 665,470 660,520 655,485 622,490 632,510 645,520 652,552 625,560 640,565 655,580 640,600 622,598 645,610 635,622 615,620 590,606 600,625 570,625 605,635 625,642 628,665 600,660 612,670 620,690 632,718 600,718 590,700 595,690 565,685 580,700 555,720 592,712 600,722 625,730 590,762 525,785 520,795 500,825 475,850 455,845 435,862 430,900 420,918 420,940 405,982 385,970 360,962 345,930 322,890 320,850 308,835 302,790 325,765 335,735 320,745 305,755 290,740 292,725 320,700 318,690 290,690 280,640 280,625 272,575 255,545 240,525 205,508 165,520 142,508 140,500 160,490 135,490 125,472 150,462 172,462 170,450 150,455 125,438 108,412 125,395 150,378 182,372 192,320 165,312 168,290 190,262 205,270 208,248 222,252Z
      M602,855 615,832 635,850 665,842 680,845 690,830 700,838 712,855 708,870 690,890 660,905 630,895 615,888 628,875 612,868 628,858Z
      M960,335 985,340 990,350 998,332 1012,378 1015,322 1035,340 1045,365 1068,390 1052,405 1042,450 1022,497 993,455 1025,438 992,428 1028,410 1000,412 985,418 968,390Z M1035,310 1055,297 1065,315 1080,320 1088,297 1095,310 1125,310 1130,325 1115,352 1100,367 1070,355 1045,348Z M1058,402 1075,402 1085,430 1103,440 1085,465 1065,455 1072,440Z M650,325 668,320 672,330 660,340Z`,
    coast: 'M655,408 657,430 M668,435v10 M650,185 656,203 M657,550 672,556 660,560 M290,640 288,680 M280,650 295,660 M310,780 325,800 M312,820 330,830 M325,880 335,875 M312,710 330,715 M1172,317 1195,310 M1120,395h3 M1133,386 1155,385 M757,705 770,698 M960,390 972,415 M110,460h10 M295,605 302,612 M365,962 400,975',
    specks: 'M1045,583h2 M778,930 783,945',
  },
];

@customElement('world-map')
class WorldMap extends LitElement {

  static styles = css`
    :host {
      display: block;
    }

    .map {
      display: block;
      width: 100%;
      height: auto;
      overflow: visible;
      stroke: #7e8183;
      stroke-width: 4;
      stroke-linejoin: round;
      stroke-linecap: round;
      fill-rule: evenodd;
    }

    .land {
      fill: #c6cbce;
    }

    .visited {
      fill: #89b8e3;
    }

    .line {
      fill: none;
    }

    .coast {
      fill: none;
      stroke-width: 6;
    }
  `;

  render() {
    return html`
      <svg class="map" viewBox="0 0 3720 2520" role="img" aria-label="Map of visited countries">
        ${REGIONS.map(region => svg`
          <g transform="translate(${region.x} ${region.y})">
            <path class="land" d="${region.land ?? ''}"/>
            <path class="visited" d="${region.visited ?? ''}"/>
            <path class="land" d="${region.rest ?? ''}"/>
            <path class="line" d="${region.borders ?? ''}"/>
            <path class="coast" d="${region.coast ?? ''}"/>
            <path class="coast" d="${region.specks ?? ''}"/>
          </g>
        `)}
      </svg>
    `;
  }
}

@customElement('eu-flag')
class EuFlag extends LitElement {

  static styles = css`
    :host {
      display: block;
    }

    svg {
      display: block;
      width: 144px;
      height: 101px;
      border-radius: 14px;
      background: #01339a;
      fill: #ffcc00;
    }
  `;

  render() {
    const stars = Array.from({ length: 12 }, (_, i) => {
      const angle = i * Math.PI / 6;
      return [72 + 32 * Math.sin(angle), 50 - 32 * Math.cos(angle)];
    });
    return html`
      <svg viewBox="0 0 144 101" role="img" aria-label="European Union">
        ${stars.map(([x, y]) => svg`
          <path transform="translate(${x} ${y})" d="M0-6 1.4-1.9 5.7-1.9 2.2.7 3.5 4.9 0 2.3-3.5 4.9-2.2.7-5.7-1.9-1.4-1.9Z"/>
        `)}
      </svg>
    `;
  }
}

const icons = {
  share: svg`
    <path d="M21 27H17Q5 27 5 39V61Q5 74 18 74H44Q57 74 57 61V39Q57 27 45 27H41"/>
    <path d="M31 50V7M19 18 31 6 43 18"/>
  `,
  plus: svg`<path d="M31 13V61M7 37H55"/>`,
  globe: svg`
    <circle cx="17" cy="17" r="15.5"/>
    <ellipse cx="17" cy="17" rx="7.5" ry="15.5"/>
    <path d="M17 2V32M2 17H32M5 9Q17 15 29 9M5 25Q17 19 29 25"/>
  `,
  map: svg`<path d="M2 8 12 2 23 8 32 2V26L23 32 12 26 2 32ZM12 2V26M23 8V32"/>`,
  luggage: svg`
    <path class="solid" d="M5 7V33H4Q0 33 0 29V11Q0 7 4 7ZM8 7H31V33H8ZM34 7H35Q39 7 39 11V29Q39 33 35 33H34Z"/>
    <path d="M13 8V5Q13 2 16 2H23Q26 2 26 5V8"/>
  `,
  americas: svg`
    <circle cx="17" cy="17" r="15.5"/>
    <path class="solid" d="M5 7Q10 2 17 1Q21 1 23 3L19 6 22 7 23 11 18 12 15 15 12 15 14 18 19 18 25 22 24 26 20 28 18 32 16 30 16 25 13 22 13 19 9 17 6 12Z"/>
  `,
  timeline: svg`
    <circle class="solid" cx="5" cy="15" r="5"/>
    <circle class="solid" cx="5" cy="36" r="5"/>
    <circle class="solid" cx="5" cy="57" r="5"/>
    <path d="M20 15H67M20 36H67M20 57H67"/>
  `,
  dashboard: svg`
    <rect class="solid" x="4" y="4" width="29" height="29" rx="7"/>
    <rect class="solid" x="38" y="4" width="29" height="29" rx="7"/>
    <rect class="solid" x="4" y="38" width="29" height="29" rx="7"/>
    <rect class="solid" x="38" y="38" width="29" height="29" rx="7"/>
  `,
  settings: svg`
    <circle class="ring" cx="36" cy="36" r="20"/>
    ${[0, 45, 90, 135, 180, 225, 270, 315].map(angle => svg`
      <path class="solid" transform="rotate(${angle} 36 36)" d="M26 13 29 4Q29 0 33 0H39Q43 0 43 4L46 13Z"/>
    `)}
  `,
};

type IconName = keyof typeof icons;

interface Stat {
  id: string;
  icon: IconName;
  label: string;
  value: number;
  total?: number;
}

interface Tab {
  id: string;
  icon: IconName;
  label: string;
}

@customElement('app-root')
class AppRoot extends LitElement {

  static styles = css`
    :host {
      display: flex;
      flex-direction: column;
      box-sizing: border-box;
      min-height: 100vh;
      padding-bottom: 62px;
      font-family: Inter, "Liberation Sans", sans-serif;
      color: #000;
      background:
        radial-gradient(ellipse 60% 14% at 50% 0, rgba(202, 226, 248, 0.8), rgba(202, 226, 248, 0)),
        linear-gradient(#d1e4f6 0, #d5e5f6 12%, #dbe7f6 24%, #e6ebf6 45%, #eaeef8 60%, #f0f1f6 80%, #f1f1f6 100%);
    }

    * {
      box-sizing: border-box;
    }

    button,
    a {
      margin: 0;
      padding: 0;
      border: 0;
      background: none;
      font: inherit;
      color: inherit;
      text-align: left;
      text-decoration: none;
      cursor: pointer;
    }

    svg {
      display: block;
      flex: none;
      overflow: visible;
      fill: none;
      stroke: currentColor;
      stroke-linecap: round;
      stroke-linejoin: round;
    }

    .solid {
      fill: currentColor;
      stroke: none;
    }

    .status {
      display: flex;
      justify-content: space-between;
      align-items: center;
      padding: 70px 120px 0 178px;
      font-size: 53px;
      font-weight: 600;
      line-height: 56px;
    }

    .indicators {
      display: flex;
      align-items: center;
      gap: 23px;
    }

    .toolbar {
      display: flex;
      justify-content: space-between;
      padding: 58px 59px 0;
    }

    .round {
      display: flex;
      align-items: center;
      justify-content: center;
      width: 134px;
      height: 134px;
      border: 1px solid #93a6bd;
      border-radius: 50%;
      color: #4490d3;
      background: linear-gradient(#dfebfd, #e2f2ff);
      box-shadow: inset 0 0 5px 2px rgba(240, 250, 255, 0.9), 0 10px 30px rgba(150, 170, 220, 0.12);
    }

    .round svg {
      width: 62px;
      height: 74px;
      stroke-width: 6;
    }

    main {
      padding: 60px 50px 0;
    }

    h1 {
      margin: 0 0 31px 9px;
      font-size: 79px;
      font-weight: 700;
      line-height: 96px;
    }

    .card {
      border: 2px solid #edf0f4;
      border-radius: 48px;
      background: #f6fafd;
    }

    .rule {
      padding: 48px 44px 17px;
    }

    .row {
      display: flex;
      align-items: center;
      justify-content: space-between;
    }

    .summary {
      height: 101px;
    }

    .name {
      flex: 1;
      padding-left: 30px;
    }

    h2 {
      margin: 0;
      font-size: 49px;
      font-weight: 600;
      line-height: 56px;
    }

    .muted {
      margin: 0;
      color: #898c90;
    }

    .caption {
      font-size: 36px;
      line-height: 44px;
    }

    .used {
      display: flex;
      align-items: baseline;
      gap: 8px;
      padding-top: 6px;
      font-size: 48px;
      line-height: 96px;
    }

    .used strong {
      font-size: 84px;
      color: #ff9028;
    }

    .track {
      height: 36px;
      margin: 45px 0 43px;
      border-radius: 18px;
      background: #d1d1d6;
      overflow: hidden;
    }

    .fill {
      height: 100%;
      border-radius: 18px;
      background: linear-gradient(90deg, #ff8f27, #f4a158);
    }

    .footnote {
      font-size: 43px;
      line-height: 52px;
    }

    .pager {
      display: flex;
      justify-content: center;
      gap: 15px;
      margin-top: 22px;
    }

    .dot {
      width: 24px;
      height: 6px;
      border-radius: 3px;
      background: #e2e5e8;
    }

    .dot.current {
      width: 42px;
      background: #bdc1c4;
    }

    .stats {
      margin-top: 63px;
    }

    .heading {
      display: flex;
      align-items: center;
      gap: 26px;
      height: 130px;
      padding-left: 38px;
      color: #000;
    }

    .heading svg {
      width: 20px;
      height: 32px;
      stroke-width: 5;
      color: #8f9296;
    }

    .grid {
      display: grid;
      grid-template-columns: 1fr 1fr;
      margin: 0 -2px -2px;
    }

    .cell {
      display: flex;
      align-items: center;
      justify-content: space-between;
      padding: 23px 32px 21px 42px;
      border-top: 1px solid #bbc0c6;
    }

    .cell:nth-child(even) {
      border-left: 1px solid #bbc0c6;
    }

    .cell > svg {
      width: 18px;
      height: 30px;
      stroke-width: 4;
      color: #bfc2c6;
    }

    .label {
      display: flex;
      align-items: center;
      gap: 16px;
    }

    .label svg {
      width: 34px;
      height: 34px;
      stroke-width: 3;
      color: #4490d3;
    }

    .label .luggage {
      width: 40px;
    }

    .value {
      margin-top: 14px;
      font-size: 62px;
      font-weight: 700;
      line-height: 72px;
    }

    world-map {
      margin: 47px 40px 40px;
    }

    .tabs {
      display: grid;
      grid-template-columns: repeat(3, 1fr);
      align-self: center;
      width: 824px;
      margin-top: auto;
      padding: 12px 24px;
      border: 1px solid #c0c0c5;
      border-radius: 94px;
      background: linear-gradient(#fefeff 0, #f3f3f8 24%, #f8f8fd 50%, #f9f9fd 100%);
      box-shadow: inset 0 0 10px #fff, 0 8px 40px rgba(120, 120, 150, 0.08);
    }

    .tab {
      display: flex;
      flex-direction: column;
      align-items: center;
      gap: 6px;
      height: 162px;
      margin: 0 -12px;
      padding-top: 23px;
      border-radius: 81px;
      color: #0d0d0f;
      font-size: 31px;
      font-weight: 500;
      line-height: 40px;
    }

    .tab.active {
      color: #3a85c6;
      font-weight: 600;
      background: #e3e3e8;
    }

    .tab svg {
      width: 72px;
      height: 72px;
      stroke-width: 6;
    }

    .ring {
      stroke-width: 16;
    }
  `;

  @property({ type: Number }) used = 85;
  @property({ type: Number }) limit = 90;

  @state() private activeTab = 'dashboard';

  private stats: Stat[] = [
    { id: 'countries', icon: 'globe', label: 'Countries', value: 57, total: 195 },
    { id: 'states', icon: 'map', label: 'US states', value: 15, total: 50 },
    { id: 'abroad', icon: 'luggage', label: 'Days Abroad', value: 776 },
    { id: 'continents', icon: 'americas', label: 'Continents', value: 5, total: 7 },
  ];

  private tabs: Tab[] = [
    { id: 'timeline', icon: 'timeline', label: 'Timeline' },
    { id: 'dashboard', icon: 'dashboard', label: 'Dashboard' },
    { id: 'settings', icon: 'settings', label: 'Settings' },
  ];

  render() {
    return html`
      ${this._renderStatus()}
      <header class="toolbar">
        <button class="round" aria-label="Share">
          <svg viewBox="0 0 62 74">${icons.share}</svg>
        </button>
        <button class="round" aria-label="Add">
          <svg viewBox="0 0 62 74">${icons.plus}</svg>
        </button>
      </header>
      <main>
        <h1>Sunday, 9 August</h1>
        ${this._renderRule()}
        ${this._renderStats()}
      </main>
      <world-map></world-map>
      <nav class="tabs">
        ${this.tabs.map(tab => html`
          <button
            class=${classMap({ tab: true, active: tab.id === this.activeTab })}
            @click=${() => { this.activeTab = tab.id; }}>
            <svg viewBox="${tab.id === 'dashboard' ? '0 0 71 71' : '0 0 72 72'}">${icons[tab.icon]}</svg>
            ${tab.label}
          </button>
        `)}
      </nav>
    `;
  }

  _renderStatus() {
    return html`
      <div class="status">
        <span>09:41</span>
        <div class="indicators">
          <svg width="66" height="43" viewBox="0 0 66 43">
            <path class="solid" d="M0 29q0-3 3-3h5q3 0 3 3v10q0 3-3 3H3q-3 0-3-3ZM18 22q0-3 3-3h5q3 0 3 3v17q0 3-3 3h-5q-3 0-3-3ZM37 13q0-3 3-3h5q3 0 3 3v26q0 3-3 3h-5q-3 0-3-3ZM55 4q0-3 3-3h5q3 0 3 3v35q0 3-3 3h-5q-3 0-3-3Z"/>
          </svg>
          <svg width="56" height="43" viewBox="0 0 56 43">
            <path class="solid" d="M28 0C17 0 7 4 1 11c-1 1-1 2 0 3l3 4c1 1 2 1 3 0 6-6 13-9 21-9s15 3 21 9c1 1 2 1 3 0l3-4c1-1 1-2 0-3C49 4 39 0 28 0ZM28 15c-7 0-12 2-17 7-1 1-1 2 0 3l3 4c1 1 2 1 3 0 3-3 7-5 11-5s8 2 11 5c1 1 2 1 3 0l3-4c1-1 1-2 0-3-5-5-10-7-17-7ZM28 29c-3 0-6 1-8 3-1 1-1 2 0 3l7 7c1 1 1 1 2 0l7-7c1-1 1-2 0-3-2-2-5-3-8-3Z"/>
          </svg>
          <svg width="94" height="43" viewBox="0 0 94 43">
            <rect class="solid" width="86" height="43" rx="14"/>
            <path class="solid" d="M89 15q5 2 5 7t-5 6Z"/>
          </svg>
        </div>
      </div>
    `;
  }

  _renderRule() {
    const width = this.used / this.limit * 100;
    return html`
      <section class="card rule">
        <div class="row summary">
          <eu-flag></eu-flag>
          <div class="name">
            <h2>Schengen</h2>
            <p class="muted caption">Short-stay rule</p>
          </div>
          <div class="used">
            <strong>${this.used}</strong>
            <span class="muted">/ ${this.limit}</span>
          </div>
        </div>
        <div class="track" role="progressbar" aria-label="Days used"
          aria-valuenow=${this.used} aria-valuemax=${this.limit}>
          <div class="fill" style="width: ${width}%"></div>
        </div>
        <div class="row muted footnote">
          <span>${this.limit - this.used} days remaining</span>
          <span>Rolling 180d</span>
        </div>
        <div class="pager">
          <span class="dot current"></span>
          <span class="dot"></span>
        </div>
      </section>
    `;
  }

  _renderStats() {
    return html`
      <section class="card stats">
        <a class="heading" href="#statistics">
          <h2>Statistics · All Time</h2>
          <svg viewBox="0 0 20 32"><path d="M3 3 17 16 3 29"/></svg>
        </a>
        <div class="grid">
          ${this.stats.map(stat => html`
            <a class="cell" href="#${stat.id}">
              <div>
                <div class="label muted caption">
                  <svg class=${stat.icon} viewBox="0 0 ${stat.icon === 'luggage' ? 40 : 34} 34">${icons[stat.icon]}</svg>
                  ${stat.label}
                </div>
                <div class="value">${stat.value}${stat.total ? html`<span class="muted">/${stat.total}</span>` : ''}</div>
              </div>
              <svg viewBox="0 0 18 30"><path d="M2 2 16 15 2 28"/></svg>
            </a>
          `)}
        </div>
      </section>
    `;
  }
}
